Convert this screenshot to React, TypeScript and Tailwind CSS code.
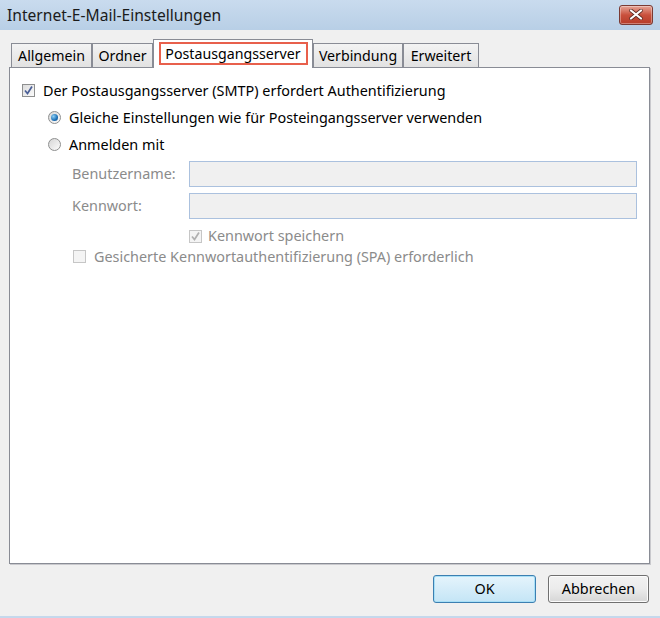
const tabs = [
  { label: "Allgemein", width: "w-[81px]" },
  { label: "Ordner", width: "w-[61px]" },
  { label: "Postausgangsserver", width: "w-[160px]", active: true },
  { label: "Verbindung", width: "w-[90px]" },
  { label: "Erweitert", width: "w-[76px]" },
];

const CheckBox = ({ checked, disabled }: { checked?: boolean; disabled?: boolean }) => (
  <span
    className={`flex items-center justify-center w-[13px] h-[13px] shrink-0 border ${
      disabled ? "border-[#c6c6c6] bg-[#f4f4f4]" : "border-[#8e8f8f] bg-gradient-to-br from-[#dcdcdc] to-[#fbfbfb]"
    }`}
  >
    {checked && (
      <svg width="11" height="11" viewBox="0 0 11 11">
        <path
          d="M2 5.5 L4.5 8.5 L9 1.5"
          fill="none"
          stroke={disabled ? "#b0b0b0" : "#4a5f97"}
          strokeWidth="1.7"
        />
      </svg>
    )}
  </span>
);

const Radio = ({ checked }: { checked?: boolean }) => (
  <span className="flex items-center justify-center w-[13px] h-[13px] shrink-0 rounded-full border border-[#8e8f8f] bg-gradient-to-br from-[#d6d6d6] to-[#fcfcfc]">
    {checked && (
      <span className="w-[7px] h-[7px] rounded-full bg-[radial-gradient(circle_at_35%_35%,#8fd0f5,#1b6fb5_60%,#0e4a86)]" />
    )}
  </span>
);

export default function App() {
  return (
    <div className="w-[660px] h-[618px] flex flex-col bg-[#f0f0f0] text-[14.4px] text-black overflow-hidden" style={{ fontFamily: '"Noto Sans", sans-serif' }}>
      {/* title bar */}
      <div className="h-[30px] shrink-0 flex items-center justify-between pl-[7px] pr-[7px] bg-gradient-to-b from-[#c9dbee] to-[#b8cfe6]">
        <span className="text-[15.6px] text-[#1b1b1b] pt-[1px]">Internet-E-Mail-Einstellungen</span>
        <div className="w-[34px] h-[20px] mt-[-1px] rounded-[3px] border border-[#7a3a33] bg-gradient-to-b from-[#e5a497] via-[#c9503c] to-[#b63d2a] flex items-center justify-center shadow-[inset_0_0_0_1px_rgba(255,255,255,0.35)]">
          <svg width="14" height="11" viewBox="0 0 14 11">
            <path d="M2 1.5 L12 9.5 M12 1.5 L2 9.5" stroke="#5a2a22" strokeWidth="3.6" strokeLinecap="round" />
            <path d="M2 1.5 L12 9.5 M12 1.5 L2 9.5" stroke="#ffffff" strokeWidth="2.2" strokeLinecap="round" />
          </svg>
        </div>
      </div>

      {/* tab strip */}
      <div className="flex items-end pl-[11px] mt-[9px] h-[28px] relative z-10 text-[14.2px]">
        {tabs.map((t) =>
          t.active ? (
            <div key={t.label} className={`${t.width} h-[29px] -mb-px bg-white border border-b-0 border-[#898c95] flex items-start justify-center pt-[2px]`}>
              <span className="border-2 border-[#e8604c] h-[23px] flex items-center w-[149px] justify-center">{t.label}</span>
            </div>
          ) : (
            <div key={t.label} className={`${t.width} h-[24px] border border-b-0 border-[#898c95] bg-gradient-to-b from-[#f3f3f3] to-[#e2e2e2] flex items-center justify-center`}>
              {t.label}
            </div>
          )
        )}
      </div>

      {/* tab panel */}
      <div className="ml-[9px] w-[641px] h-[497px] bg-white border border-[#898c95] shadow-[1px_1px_0_#c9c9cd] pt-[9px]">
        <div className="flex items-center h-[27px] pl-[12px] gap-[8px]">
          <CheckBox checked />
          <span>Der Postausgangsserver (SMTP) erfordert Authentifizierung</span>
        </div>
        <div className="flex items-center h-[27px] pl-[38px] gap-[8px]">
          <Radio checked />
          <span>Gleiche Einstellungen wie für Posteingangsserver verwenden</span>
        </div>
        <div className="flex items-center h-[27px] pl-[38px] gap-[8px]">
          <Radio />
          <span>Anmelden mit</span>
        </div>

        <div className="flex items-center mt-[3px] pl-[62px]">
          <span className="w-[117px] text-[#8b8b8b]">Benutzername:</span>
          <div className="w-[448px] h-[26px] bg-[#f0f0f0] border border-[#abc1de]" />
        </div>
        <div className="flex items-center mt-[6px] pl-[62px]">
          <span className="w-[117px] text-[#8b8b8b]">Kennwort:</span>
          <div className="w-[448px] h-[26px] bg-[#f0f0f0] border border-[#abc1de]" />
        </div>

        <div className="flex items-center h-[20px] mt-[7px] pl-[179px] gap-[6px]">
          <CheckBox checked disabled />
          <span className="text-[#8b8b8b]">Kennwort speichern</span>
        </div>
        <div className="flex items-center h-[21px] pl-[63px] gap-[8px]">
          <CheckBox disabled />
          <span className="text-[#8b8b8b]">Gesicherte Kennwortauthentifizierung (SPA) erforderlich</span>
        </div>
      </div>

      {/* buttons */}
      <div className="flex justify-end gap-[12px] pr-[11px] mt-[11px]">
        <button className="w-[103px] h-[28px] rounded-[3px] border border-[#3c7fb1] bg-gradient-to-b from-[#e5f4fc] to-[#c4e5f6] shadow-[inset_0_0_0_1px_#a8e0f7]">OK</button>
        <button className="w-[101px] h-[28px] rounded-[3px] border border-[#707070] bg-gradient-to-b from-[#f2f2f2] via-[#ebebeb] to-[#d6d6d6] shadow-[inset_0_0_0_1px_#fcfcfc]">Abbrechen</button>
      </div>

      <div className="flex-1" />
      <div className="h-[2px] bg-[#c5d8ec]" />
    </div>
  );
}
